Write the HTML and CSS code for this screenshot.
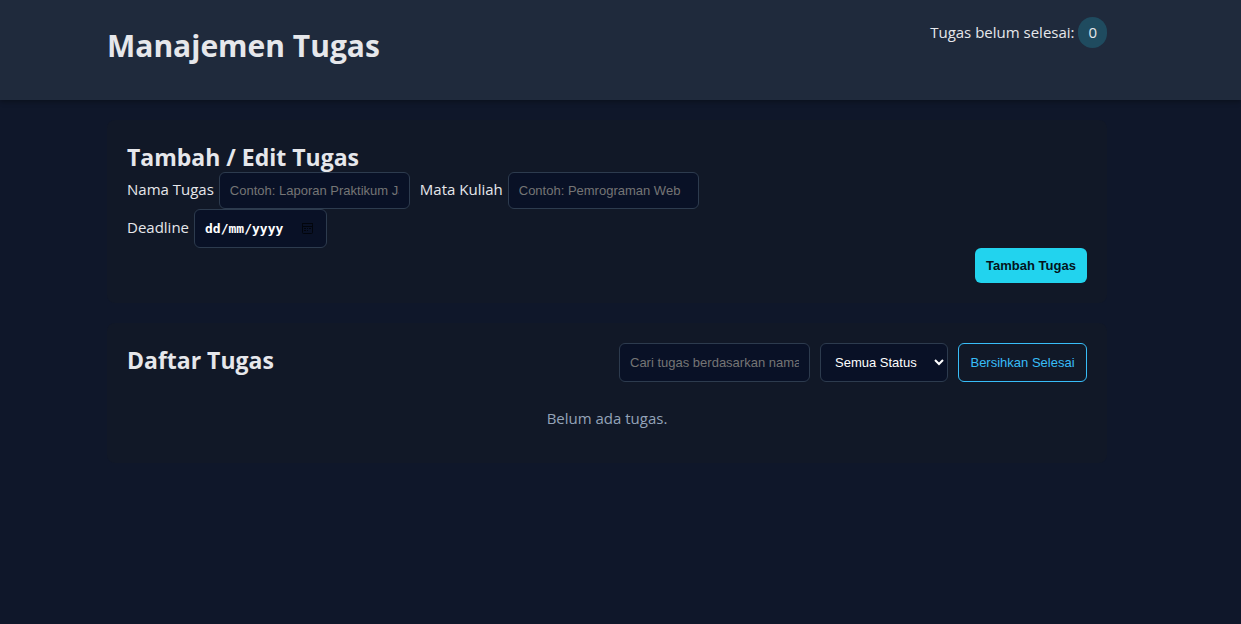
FILE: index.html
```html
<!DOCTYPE html>
<html lang="id">
<head>
<meta charset="utf-8">
<meta name="viewport" content="width=device-width, initial-scale=1">
<title>Manajemen Tugas</title>
<link rel="stylesheet" href="styles.css">
</head>
<body>
<header class="site-header">
  <div class="container header-inner">
    <h1 class="site-title">Manajemen Tugas</h1>
    <p class="counter">Tugas belum selesai: <span class="badge">0</span></p>
  </div>
</header>
<main class="page">
  <div class="container cards">
    <section class="card">
      <h2 class="card-title">Tambah / Edit Tugas</h2>
      <form class="task-form">
        <div class="form-row">
          <div class="field">
            <label class="label" for="nama">Nama Tugas</label>
            <input class="control" id="nama" type="text" placeholder="Contoh: Laporan Praktikum Jaringan">
          </div>
          <div class="field">
            <label class="label" for="matkul">Mata Kuliah</label>
            <input class="control" id="matkul" type="text" placeholder="Contoh: Pemrograman Web">
          </div>
        </div>
        <div class="form-row">
          <div class="field">
            <label class="label" for="deadline">Deadline</label>
            <div class="date-box">
              <input class="control date" id="deadline" type="text" inputmode="numeric" placeholder="dd/mm/yyyy">
              <svg class="date-icon" viewBox="0 0 13 13" aria-hidden="true">
                <rect x="1.5" y="1.5" width="10" height="10" rx="1" fill="none" stroke="currentColor"/>
                <path d="M1 1.500h11M1 4.500h11M6 6.500h1M8 6.500h2M3 6.500h2M3 8.500h2M6 8.500h1" fill="none" stroke="currentColor"/>
              </svg>
            </div>
          </div>
        </div>
        <div class="actions">
          <button class="button primary" type="submit">Tambah Tugas</button>
        </div>
      </form>
    </section>
    <section class="card">
      <div class="list-head">
        <h2 class="card-title">Daftar Tugas</h2>
        <div class="filters">
          <input class="control" type="text" aria-label="Cari tugas" placeholder="Cari tugas berdasarkan nama atau mata kuliah">
          <select class="control status" aria-label="Status">
            <option>Semua Status</option>
            <option>Belum Selesai</option>
            <option>Selesai</option>
          </select>
          <button class="button outline" type="button">Bersihkan Selesai</button>
        </div>
      </div>
      <p class="empty">Belum ada tugas.</p>
    </section>
  </div>
</main>
</body>
</html>
```
FILE: styles.css
```css
* {
  box-sizing: border-box;
}

body {
  margin: 0;
  min-height: 100vh;
  background: #0f172a;
  color: #e6e7eb;
  font-family: "Segoe UI", "Open Sans", "Noto Sans", sans-serif;
  font-size: 15px;
  line-height: 24px;
}

h1, h2, p {
  margin: 0;
}

.container {
  max-width: 1000px;
  margin: 0 auto;
}

.site-header,
.page {
  padding-right: 27px;
}

.site-header {
  background: #1f2a3c;
  box-shadow: 0 2px 5px rgba(0, 0, 0, 0.3);
}

.header-inner {
  display: flex;
  justify-content: space-between;
  align-items: flex-start;
  padding: 16px 0 24px;
}

.site-title {
  font-size: 30px;
  line-height: 60px;
}

.counter {
  line-height: 32px;
}

.badge {
  display: inline-block;
  padding: 4px 10px;
  border-radius: 999px;
  background: #1f4b5f;
  line-height: 23px;
}

.page {
  padding-top: 20px;
}

.cards {
  display: flex;
  flex-direction: column;
  gap: 20px;
}

.card {
  padding: 20px;
  border-radius: 8px;
  background: #111827;
}

.card-title {
  padding-top: 2px;
  font-size: 23px;
  line-height: 30px;
}

.form-row {
  display: flex;
  flex-wrap: wrap;
  gap: 10px;
}

.field {
  display: flex;
  align-items: center;
  gap: 5px;
}

.label {
  padding-bottom: 3px;
}

.control {
  width: 191px;
  height: 37px;
  padding: 8px 10px;
  border: 1px solid #2d3b4e;
  border-radius: 6px;
  background: #091126;
  color: #fff;
  font-family: "Liberation Sans", Arial, sans-serif;
  font-size: 13px;
}

.control::placeholder {
  color: #757575;
}

.date-box {
  position: relative;
}

.date {
  display: block;
  width: 133px;
  height: 39px;
  font-family: "DejaVu Sans Mono", monospace;
}

.date::placeholder {
  color: #fff;
  font-weight: 700;
}

.date-icon {
  position: absolute;
  top: 13px;
  right: 13px;
  width: 13px;
  height: 13px;
  color: #02050c;
}

.actions {
  display: flex;
  justify-content: flex-end;
}

.button {
  padding: 8px 10px;
  border: 0;
  border-radius: 6px;
  font-family: "Liberation Sans", Arial, sans-serif;
  font-size: 13px;
}

.primary {
  min-width: 112px;
  height: 35px;
  background: #22d3ee;
  color: #04141c;
  font-weight: 700;
}

.outline {
  min-width: 129px;
  height: 39px;
  border: 1px solid #38bdf8;
  background: transparent;
  color: #38bdf8;
}

.list-head {
  display: flex;
  justify-content: space-between;
  align-items: flex-start;
}

.filters {
  display: flex;
  gap: 10px;
}

.filters .control {
  height: 39px;
}

.filters .status {
  width: 128px;
  padding: 8px 0 8px 10px;
}

.empty {
  padding: 24px 0 13px;
  color: #94a3b8;
  text-align: center;
}
```
